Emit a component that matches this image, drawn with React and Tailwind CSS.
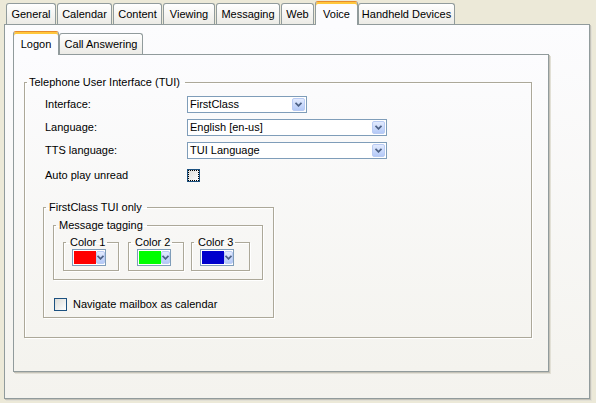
import React from 'react';

const topTabs = [
  { label: 'General', cls: 'ml-[6px] w-[50px]' },
  { label: 'Calendar', cls: 'ml-[1px] w-[55px]' },
  { label: 'Content', cls: 'ml-[1px] w-[49px]' },
  { label: 'Viewing', cls: 'ml-[1px] w-[52px]' },
  { label: 'Messaging', cls: 'ml-[1px] w-[64px]' },
  { label: 'Web', cls: 'ml-[1px] w-[33px]' },
  { label: 'Voice', cls: 'ml-[1px] w-[43px]', active: true },
  { label: 'Handheld Devices', cls: 'w-[97px]' },
];

const subTabs = [
  { label: 'Logon', cls: 'ml-[8px] w-[46px]', active: true },
  { label: 'Call Answering', cls: 'w-[84px]' },
];

const Tab = ({ label, cls, active }) =>
  active ? (
    <div
      className={`${cls} relative z-10 -mb-px h-[24px] flex items-center justify-center rounded-t-[3px] border-x border-t border-[#919B9C] border-t-[#E68B2C] bg-[#FCFCFE] shadow-[inset_0_2px_0_#FFC73C]`}
    >
      <span className="pt-[2px]">{label}</span>
    </div>
  ) : (
    <div
      className={`${cls} h-[21px] flex items-center justify-center rounded-t-[3px] border-x border-t border-[#919B9C] bg-gradient-to-b from-white to-[#ECEBE6]`}
    >
      {label}
    </div>
  );

const Chevron = () => (
  <svg width="7" height="5" viewBox="0 0 7 5">
    <polyline points="0.5,0.8 3.5,3.8 6.5,0.8" fill="none" stroke="#4D6185" strokeWidth="1.8" />
  </svg>
);

const ArrowButton = ({ cls }) => (
  <div
    className={`${cls} h-[13px] flex items-center justify-center rounded-[2px] border border-[#B9CBF3] bg-gradient-to-b from-[#E3EBFE] to-[#B4C9F7]`}
  >
    <Chevron />
  </div>
);

const Select = ({ w, value }) => (
  <div className={`${w} h-[17px] flex items-center border border-[#7F9DB9] bg-white`}>
    <span className="flex-1 pl-[2px] leading-[13px]">{value}</span>
    <ArrowButton cls="w-[13px] mr-px" />
  </div>
);

const ColorPick = ({ swatch }) => (
  <div className="ml-[8px] w-[34px] h-[17px] flex items-center border border-[#7F9DB9] bg-white pl-px">
    <div className={`${swatch} w-[22px] h-[13px]`} />
    <ArrowButton cls="w-[9px]" />
  </div>
);

const Checkbox = ({ focus }) => (
  <div className="w-[13px] h-[13px] border border-[#1C5180] bg-gradient-to-br from-[#DCDCD7] to-white">
    {focus && <div className="w-full h-full border border-dotted border-black" />}
  </div>
);

const Group = ({ label, cls, legendCls, children }) => (
  <fieldset className={`${cls} border border-[#ACA899] shadow-[inset_1px_1px_0_#fff,1px_1px_0_#fff]`}>
    <legend className={`${legendCls} ml-[2px] leading-[13px]`}>{label}</legend>
    {children}
  </fieldset>
);

const Row = ({ label, children, cls }) => (
  <div className={`${cls} h-[17px] flex items-center`}>
    <span className="w-[162px] pl-[20px]">{label}</span>
    {children}
  </div>
);

export default function App() {
  return (
    <div className="w-[596px] h-[403px] overflow-hidden bg-[#ECE9D8] text-[11px] text-black font-['Liberation_Sans',Arial,sans-serif]">
      <div className="h-[24px] flex items-end">
        {topTabs.map((t) => (
          <Tab key={t.label} {...t} />
        ))}
      </div>

      <div className="ml-[4px] w-[586px] h-[375px] border border-[#919B9C] bg-gradient-to-b from-[#FCFCFE] to-[#F4F3EE] shadow-[1px_1px_0_#C4C2B8,2px_2px_0_#E2E0D6]">
        <div className="mt-[6px] h-[23px] flex items-end">
          {subTabs.map((t) => (
            <Tab key={t.label} {...t} />
          ))}
        </div>

        <div className="ml-[8px] w-[536px] h-[318px] border border-[#919B9C] bg-gradient-to-b from-[#FCFCFE] to-[#F4F3EE] shadow-[1px_1px_0_#C4C2B8,2px_2px_0_#E2E0D6]">
          <Group
            label="Telephone User Interface (TUI)"
            cls="ml-[10px] mt-[21px] w-[508px] h-[262px]"
            legendCls="pl-[2px] pr-[5px]"
          >
            <div className="pt-[7px]">
              <Row label="Interface:">
                <Select w="w-[120px]" value="FirstClass" />
              </Row>
              <Row label="Language:" cls="mt-[6px]">
                <Select w="w-[200px]" value="English [en-us]" />
              </Row>
              <Row label="TTS language:" cls="mt-[6px]">
                <Select w="w-[200px]" value="TUI Language" />
              </Row>
              <Row label="Auto play unread" cls="mt-[8px]">
                <Checkbox focus />
              </Row>

              <Group
                label="FirstClass TUI only"
                cls="ml-[18px] mt-[17px] w-[231px] h-[117px]"
                legendCls="pl-[3px] pr-[5px]"
              >
                <Group
                  label="Message tagging"
                  cls="ml-[9px] mt-[5px] w-[210px] h-[61px]"
                  legendCls="pl-[3px] pr-[4px]"
                >
                  <div className="ml-[9px] mt-[4px] flex">
                    <Group label="Color 1" cls="w-[56px] h-[35px]" legendCls="pl-[4px] pr-[2px]">
                      <ColorPick swatch="bg-[#FF0000]" />
                    </Group>
                    <Group label="Color 2" cls="ml-[9px] w-[56px] h-[35px]" legendCls="pl-[4px] pr-[2px]">
                      <ColorPick swatch="bg-[#00FF00]" />
                    </Group>
                    <Group label="Color 3" cls="ml-[7px] w-[59px] h-[35px]" legendCls="pl-[4px] pr-[2px]">
                      <ColorPick swatch="bg-[#0000CC]" />
                    </Group>
                  </div>
                </Group>

                <div className="mt-[16px] ml-[10px] flex items-center gap-[6px]">
                  <Checkbox />
                  <span>Navigate mailbox as calendar</span>
                </div>
              </Group>
            </div>
          </Group>
        </div>
      </div>
    </div>
  );
}
